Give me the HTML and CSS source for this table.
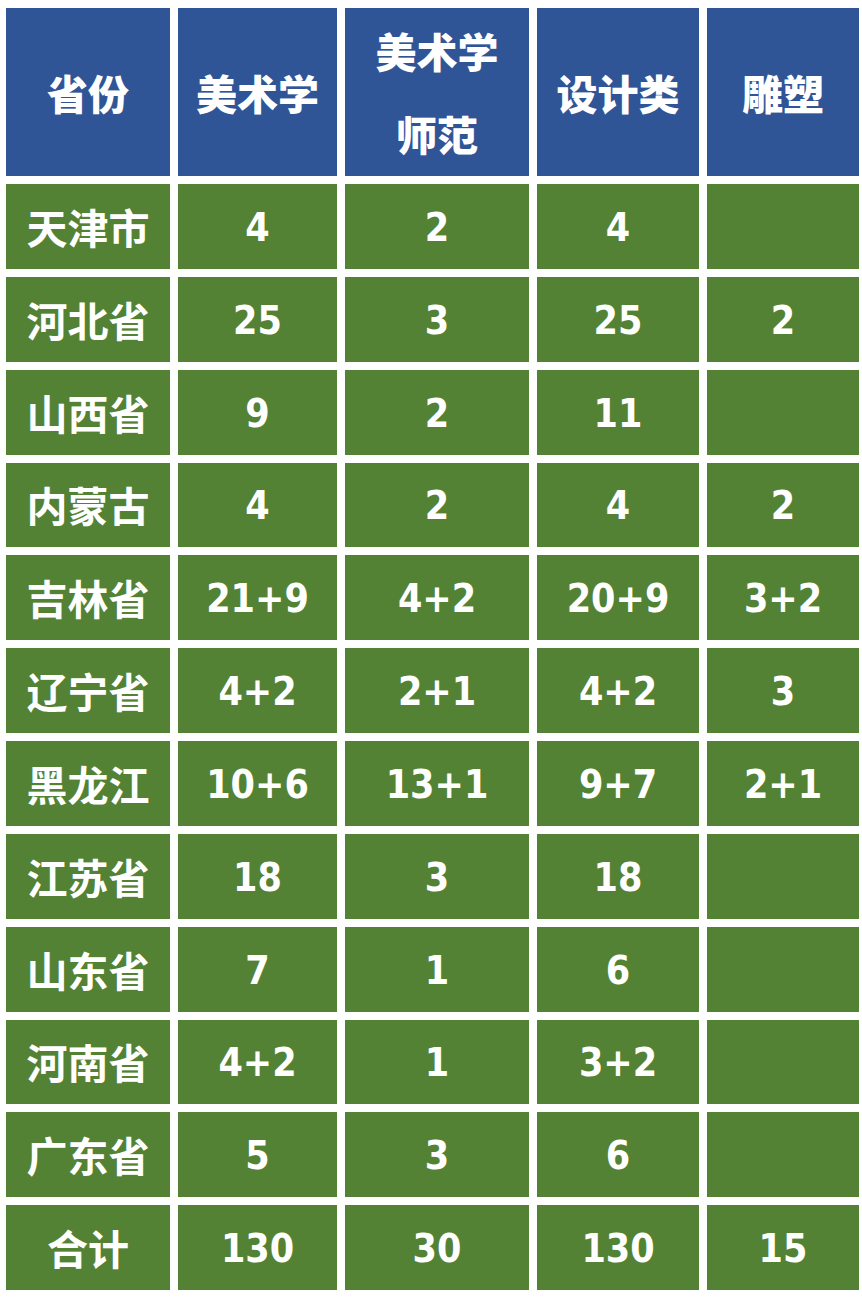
FILE: index.html
```html
<!DOCTYPE html>
<html lang="zh">
<head>
<meta charset="utf-8">
<title>省份统计</title>
<link rel="stylesheet" href="styles.css">
</head>
<body>
<div class="table">
  <div class="cell head">省份</div>
  <div class="cell head">美术学</div>
  <div class="cell head two">美术学<br>师范</div>
  <div class="cell head">设计类</div>
  <div class="cell head">雕塑</div>

  <div class="cell prov">天津市</div><div class="cell num">4</div><div class="cell num">2</div><div class="cell num">4</div><div class="cell num"></div>
  <div class="cell prov">河北省</div><div class="cell num">25</div><div class="cell num">3</div><div class="cell num">25</div><div class="cell num">2</div>
  <div class="cell prov">山西省</div><div class="cell num">9</div><div class="cell num">2</div><div class="cell num">11</div><div class="cell num"></div>
  <div class="cell prov">内蒙古</div><div class="cell num">4</div><div class="cell num">2</div><div class="cell num">4</div><div class="cell num">2</div>
  <div class="cell prov">吉林省</div><div class="cell num">21+9</div><div class="cell num">4+2</div><div class="cell num">20+9</div><div class="cell num">3+2</div>
  <div class="cell prov">辽宁省</div><div class="cell num">4+2</div><div class="cell num">2+1</div><div class="cell num">4+2</div><div class="cell num">3</div>
  <div class="cell prov">黑龙江</div><div class="cell num">10+6</div><div class="cell num">13+1</div><div class="cell num">9+7</div><div class="cell num">2+1</div>
  <div class="cell prov">江苏省</div><div class="cell num">18</div><div class="cell num">3</div><div class="cell num">18</div><div class="cell num"></div>
  <div class="cell prov">山东省</div><div class="cell num">7</div><div class="cell num">1</div><div class="cell num">6</div><div class="cell num"></div>
  <div class="cell prov">河南省</div><div class="cell num">4+2</div><div class="cell num">1</div><div class="cell num">3+2</div><div class="cell num"></div>
  <div class="cell prov">广东省</div><div class="cell num">5</div><div class="cell num">3</div><div class="cell num">6</div><div class="cell num"></div>
  <div class="cell prov">合计</div><div class="cell num">130</div><div class="cell num">30</div><div class="cell num">130</div><div class="cell num">15</div>
</div>
</body>
</html>
```

FILE: styles.css
```css
html, body {
  margin: 0;
  padding: 0;
  background: #ffffff;
}

body {
  padding: 8px 0 0 6px;
}

.table {
  display: grid;
  grid-template-columns: 164px 159px 184px 162px 152px;
  grid-template-rows: 168px repeat(12, 1fr);
  gap: 8px;
  height: 1282px;
  width: 853px;
}

.cell {
  display: flex;
  align-items: center;
  justify-content: center;
  text-align: center;
  color: #ffffff;
  background: #548235;
}

.head {
  background: #2f5597;
  font-family: "Noto Sans CJK SC", "Noto Sans", sans-serif;
  font-weight: 900;
  font-size: 41px;
  line-height: 83px;
}

.prov {
  font-family: "Noto Sans CJK SC", "Noto Sans", sans-serif;
  font-weight: 700;
  font-size: 41px;
  line-height: 1;
}

.num {
  font-family: "DejaVu Sans Condensed", "DejaVu Sans", sans-serif;
  font-stretch: condensed;
  font-weight: 700;
  font-size: 39px;
  line-height: 1;
  padding-top: 2px;
}
```
